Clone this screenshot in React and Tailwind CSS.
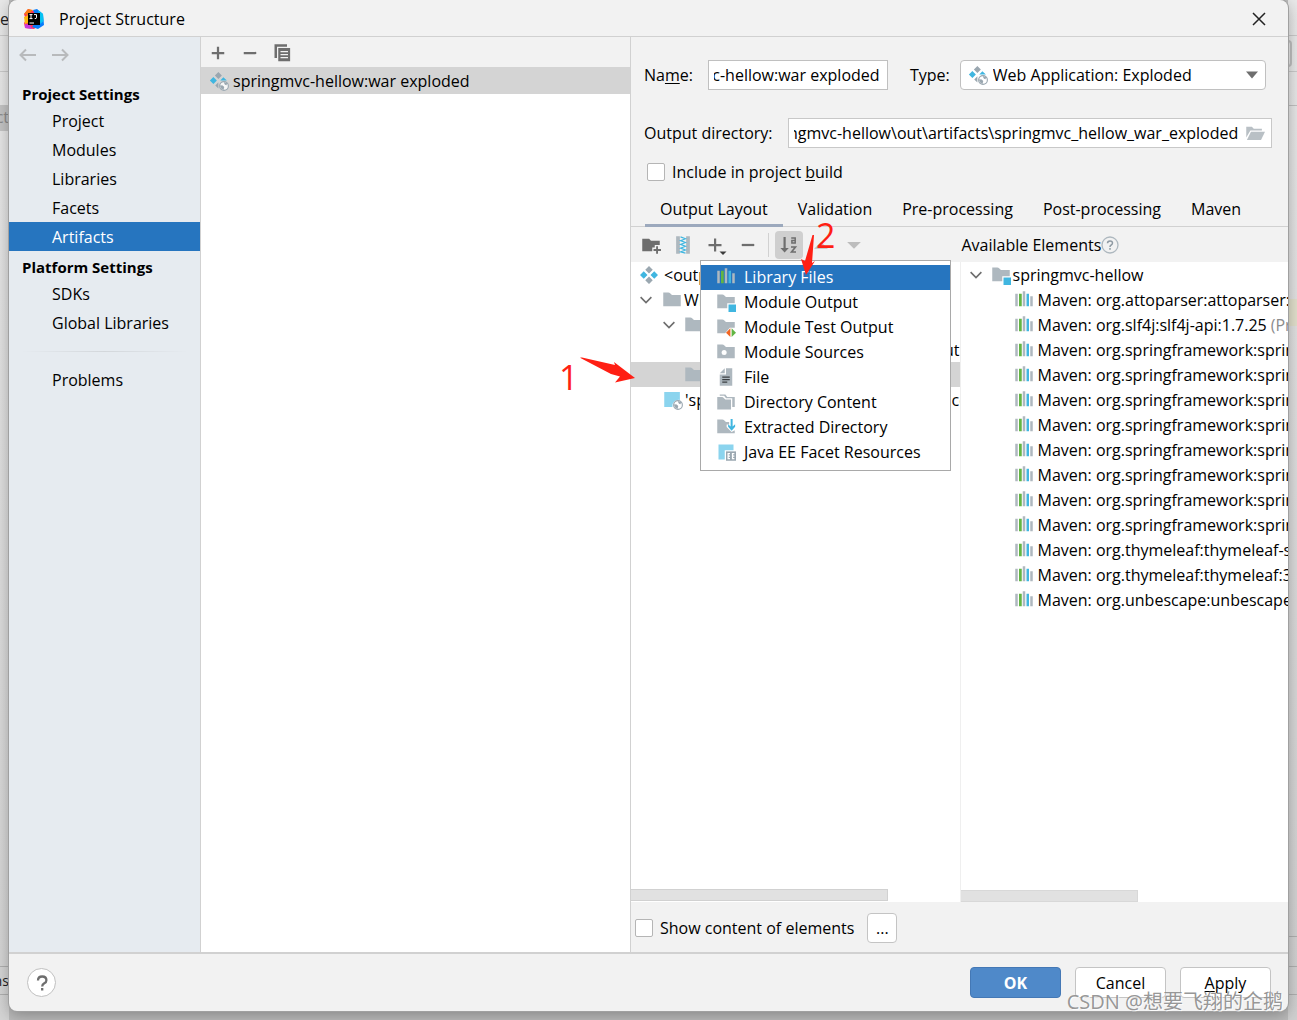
import { useEffect, useRef } from 'react';

const projectSettings = ['Project', 'Modules', 'Libraries', 'Facets', 'Artifacts'];
const platformSettings = ['SDKs', 'Global Libraries'];
const tabs = ['Output Layout', 'Validation', 'Pre-processing', 'Post-processing', 'Maven'];

const libraries = [
  { name: 'Maven: org.attoparser:attoparser:2.0.5' },
  { name: 'Maven: org.slf4j:slf4j-api:1.7.25', note: '(Project Library)' },
  { name: 'Maven: org.springframework:spring-aop:5.3.1' },
  { name: 'Maven: org.springframework:spring-beans:5.3.1' },
  { name: 'Maven: org.springframework:spring-context:5.3.1' },
  { name: 'Maven: org.springframework:spring-core:5.3.1' },
  { name: 'Maven: org.springframework:spring-expression:5.3.1' },
  { name: 'Maven: org.springframework:spring-jcl:5.3.1' },
  { name: 'Maven: org.springframework:spring-web:5.3.1' },
  { name: 'Maven: org.springframework:spring-webmvc:5.3.1' },
  { name: 'Maven: org.thymeleaf:thymeleaf-spring5:3.0.12' },
  { name: 'Maven: org.thymeleaf:thymeleaf:3.0.12' },
  { name: 'Maven: org.unbescape:unbescape:1.1.6' },
];

const FOLDER = 'M1 13h14V4H8L6.7 2.7A2.4 2.4 0 0 0 5 2H1z';

function Icon({ children, className = '' }) {
  return (
    <svg viewBox="0 0 16 16" className={`size-5 shrink-0 ${className}`} aria-hidden="true">
      {children}
    </svg>
  );
}

const Plus = () => <Icon><path d="M7.1 3h1.8v4.1H13v1.8H8.9V13H7.1V8.9H3V7.1h4.1z" fill="#6e6e6e" /></Icon>;
const Minus = () => <Icon><path d="M3 7.1h10v1.8H3z" fill="#6e6e6e" /></Icon>;

const Copy = () => (
  <Icon>
    <path d="M2 1h10v2H4v9H2z" fill="#6e6e6e" />
    <path fillRule="evenodd" d="M5 4h9.500v10.500H5zM6.800 6.300v1h6v-1zM6.800 8.700v1h6v-1zM6.800 11.100v1h6v-1z" fill="#6e6e6e" />
  </Icon>
);

const Folder = () => <Icon><path d={FOLDER} fill="#aeb8bf" /></Icon>;

const ModuleFolder = () => (
  <Icon>
    <path d="M1 13h8V9h6V4H8L6.700 2.700A2.400 2.400 0 0 0 5 2H1z" fill="#aeb8bf" />
    <path d="M10 10h6v6h-6z" fill="#40b6e0" />
  </Icon>
);

const TestFolder = () => (
  <Icon>
    <path d="M1 13h6.300L11 8.500h4V4H8L6.700 2.700A2.400 2.400 0 0 0 5 2H1z" fill="#aeb8bf" />
    <path d="M11.500 9v7L8 12.500z" fill="#f26522" />
    <path d="M12.500 9v7l3.500-3.500z" fill="#62b543" />
  </Icon>
);

const SourceFolder = () => (
  <Icon>
    <path d={FOLDER} fill="#aeb8bf" />
    <circle cx="6.500" cy="8.300" r="2" fill="#fff" />
  </Icon>
);

const FileIcon = () => (
  <Icon>
    <path d="M7 1v4H3z" fill="#aeb8bf" />
    <path d="M8 1h5v14H3V6h5z" fill="#aeb8bf" />
    <path d="M5 7.500h6v1H5zM5 9.500h6v1H5zM5 11.500h4v1H5z" fill="#3b3f43" />
  </Icon>
);

const DirectoryContent = () => (
  <Icon>
    <path d="M1 14h11V6H7.500L6.200 4.700A2 2 0 0 0 4.800 4H1z" fill="#aeb8bf" />
    <path d="M3 3V2h4.500l1.500 2H15v8h-2V5H8L6.500 3z" fill="#aeb8bf" />
  </Icon>
);

const ExtractedDirectory = () => (
  <Icon>
    <path d="M1 13h14v-2.500l-2.500 1.500L8.500 8V6h2V4H8L6.700 2.700A2.400 2.400 0 0 0 5 2H1z" fill="#aeb8bf" />
    <path d="M11.700 1.500h1.600v6l2-1.700v2L12.500 11 9.700 7.800v-2l2 1.700z" fill="#40b6e0" />
  </Icon>
);

const FacetResources = () => (
  <Icon>
    <path d="M2 2h12v4.500H7V14H2z" fill="#8bd4ee" />
    <path d="M8 7.500h8V15H8z" fill="#9aa7b0" />
    <path d="M9.200 8.700h2v1h-1v1h1v1h-1v1h1v1h-2zM12.700 8.700h2v1h-1v1h1v1h-1v1h1v1h-2z" fill="#fff" />
  </Icon>
);

const Globe = () => (
  <g>
    <circle cx="12" cy="12" r="3.600" fill="#fff" fillOpacity="0.800" />
    <circle cx="12" cy="12" r="3.500" fill="none" stroke="#9aa7b0" strokeWidth="0.900" />
    <path d="M9 11.300l2 .2 1.200 1.300-.6 2.300-1.500-.7L9 12.800zM12 8.800l2.500 1-.5 1.500-1.200-.3-.6-1z" fill="#9aa7b0" />
  </g>
);

const WebFacet = () => (
  <Icon>
    <path d="M1 1.500h12.500V8A5 5 0 0 0 7.500 13.500H1z" fill="#8bd4ee" />
    <Globe />
  </Icon>
);

const Artifact = () => (
  <Icon>
    <path d="M8 .8l3 3-3 3-3-3zM8 9.200l3 3-3 3-3-3z" fill="#9aa7b0" />
    <path d="M3.800 5l3 3-3 3-3-3zM12.200 5l3 3-3 3-3-3z" fill="#40b6e0" />
  </Icon>
);

const WebArtifact = () => (
  <Icon>
    <path d="M7.500.8l2.800 2.800-2.800 2.800-2.800-2.800zM5 11.500l2.500-2.500v5z" fill="#9aa7b0" />
    <path d="M3.500 4.800l2.800 2.800-2.800 2.800L.7 7.600zM11.500 5l2.800 2.500H9z" fill="#40b6e0" />
    <Globe />
  </Icon>
);

const Library = () => (
  <Icon>
    <path d="M1 3h2v10H1zM7 1h2v12H7zM13 5h2v8h-2z" fill="#aeb8bf" />
    <path d="M4 3h2.200v10H4z" fill="#62b543" />
    <path d="M10 3h2v10h-2z" fill="#40b6e0" />
  </Icon>
);

const Chevron = () => (
  <Icon><path d="M3.700 5.700L8 10l4.300-4.300" fill="none" stroke="#6e6e6e" strokeWidth="1.300" /></Icon>
);

const NewFolder = () => (
  <Icon>
    <path d="M1 13h8v-3h2V8h4V4.500H8L6.500 3H1z" fill="#6e6e6e" />
    <path d="M12.100 9h1.500v2.200H16v1.500h-2.400V15h-1.500v-2.300H10v-1.500h2.100z" fill="#6e6e6e" />
  </Icon>
);

const Archive = () => (
  <Icon>
    <path d="M2.500 1H5.500v14H2.500zM10.500 1h3v14h-3z" fill="#aeb8bf" />
    <path d="M6 1.500l4 1.500-4 1.500L10 6 6 7.500 10 9l-4 1.500 4 1.500-4 1.500 4 1" fill="none" stroke="#40b6e0" strokeWidth="0.900" />
  </Icon>
);

const SortAz = () => (
  <svg viewBox="0 0 20 20" className="size-5 shrink-0" aria-hidden="true">
    <path d="M4.500 2h2.200v11h3.100l-4.200 4.500L1.400 13h3.100z" fill="#6e6e6e" />
    <path d="M12.200 3h4v5.700M16.200 5.400h-3.300v2.700h3.300" fill="none" stroke="#6e6e6e" strokeWidth="1.500" />
    <path d="M12 12h4.500L12.500 17H17" fill="none" stroke="#6e6e6e" strokeWidth="1.600" />
  </svg>
);

const OpenFolder = () => (
  <Icon>
    <path d="M1 11.500V3h4.500L7 4.500h6.500V6H4.300z" fill="#b9c0c5" />
    <path d="M4.800 7H16l-3.200 6.500H1.500z" fill="#b9c0c5" />
  </Icon>
);

const Logo = () => (
  <svg viewBox="0 0 20 20" className="size-5 shrink-0" aria-hidden="true">
    <path d="M4 0l6 2 4 15-4 3-9-1-1-5 2-3-2-6z" fill="#fe315d" />
    <path d="M4 0l5 1-5 5-4-1z" fill="#f97a12" />
    <path d="M0 8l4-2v8l-3 1z" fill="#fdb60d" />
    <path d="M1 15l5 1 2 4-7-1z" fill="#c838e0" />
    <path d="M9 1l4-1 6 5 1 11-6 4-6-2 5-7z" fill="#087cfa" />
    <path d="M14 1l5 4 .5 7-3 3z" fill="#07c3f2" />
    <path d="M4 4h12v12H4z" fill="#000" />
    <path d="M5.500 5.600h3M7 5.600v4M5.500 9.600h3M10 5.600h2.500v3.200q0 1-1.800.8M5.500 14h4.500" fill="none" stroke="#fff" />
  </svg>
);

const menuItems = [
  { label: 'Library Files', icon: Library, active: true },
  { label: 'Module Output', icon: ModuleFolder },
  { label: 'Module Test Output', icon: TestFolder },
  { label: 'Module Sources', icon: SourceFolder },
  { label: 'File', icon: FileIcon },
  { label: 'Directory Content', icon: DirectoryContent },
  { label: 'Extracted Directory', icon: ExtractedDirectory },
  { label: 'Java EE Facet Resources', icon: FacetResources },
];

// Text field that shows the end of a value that is too long for it
function EndInput({ id, value, className }) {
  const ref = useRef(null);

  useEffect(() => {
    ref.current.scrollLeft = ref.current.scrollWidth;
  }, []);

  return <input id={id} ref={ref} type="text" defaultValue={value} className={`min-w-0 outline-none ${className}`} />;
}

function NavItem({ label, active }) {
  return (
    <li>
      <a
        href="#"
        className={`flex h-[29px] items-center pl-[43px] ${active ? 'bg-[#2675bf] text-white' : ''}`}
      >
        {label}
      </a>
    </li>
  );
}

function Sidebar() {
  return (
    <nav className="w-48 shrink-0 border-r border-[#d1d1d1] bg-[#e6ebf0]">
      <div className="flex h-[43px] items-center gap-3 pt-1 pb-3 pl-[9px] text-[#b8babc]">
        <button type="button" aria-label="Back">
          <svg viewBox="0 0 20 20" className="size-5" fill="none" stroke="currentColor" strokeWidth="2"><path d="M18 10H3M8 4.500L2.500 10 8 15.500" /></svg>
        </button>
        <button type="button" aria-label="Forward">
          <svg viewBox="0 0 20 20" className="size-5" fill="none" stroke="currentColor" strokeWidth="2"><path d="M2 10h15M12 4.500l5.500 5.500-5.500 5.500" /></svg>
        </button>
      </div>
      <h2 className="flex h-[26px] items-center pt-[2px] pl-[13px] text-[15px] font-bold">Project Settings</h2>
      <ul>
        {projectSettings.map(item => <NavItem key={item} label={item} active={item === 'Artifacts'} />)}
      </ul>
      <h2 className="flex h-7 items-center pt-1 pl-[13px] text-[15px] font-bold">Platform Settings</h2>
      <ul>
        {platformSettings.map(item => <NavItem key={item} label={item} />)}
      </ul>
      <hr className="mx-3 mt-[14px] mb-[13px] h-px border-0 bg-linear-to-r from-transparent via-[#d3d7db] to-transparent" />
      <ul>
        <NavItem label="Problems" />
      </ul>
    </nav>
  );
}

function ArtifactList() {
  return (
    <section className="flex w-[430px] shrink-0 flex-col border-r border-[#d1d1d1] bg-white">
      <div className="flex h-[30px] items-center gap-3 bg-[#f2f2f2] px-[7px] pt-px">
        <button type="button" aria-label="Add"><Plus /></button>
        <button type="button" aria-label="Remove"><Minus /></button>
        <button type="button" aria-label="Copy"><Copy /></button>
      </div>
      <div className="flex h-[27px] items-center gap-1 bg-[#d4d4d4] pl-2">
        <WebArtifact />
        springmvc-hellow:war exploded
      </div>
    </section>
  );
}

function AddMenu() {
  return (
    <ul role="menu" className="absolute top-[25px] -left-[5px] z-10 w-[251px] border border-[#a9a9a9] bg-white pt-1 pb-[5px]">
      {menuItems.map(({ label, icon: ItemIcon, active }) => (
        <li key={label} role="none">
          <button
            type="button"
            role="menuitem"
            className={`flex h-[25px] w-full items-center gap-2 pl-[15px] ${active ? 'bg-[#2675bf] text-white' : ''}`}
          >
            <ItemIcon />
            {label}
          </button>
        </li>
      ))}
    </ul>
  );
}

function LayoutToolbar() {
  return (
    <div className="flex h-[35px] items-center pl-[10px]">
      <button type="button" aria-label="Create directory" className="mr-3"><NewFolder /></button>
      <button type="button" aria-label="Create archive" className="mr-3"><Archive /></button>
      <div className="relative mr-[13px] flex">
        <button type="button" aria-label="Add copy of">
          <svg viewBox="0 0 20 20" className="size-5 overflow-visible" aria-hidden="true">
            <path d="M9 3.500h2.200V9h5.300v2.200h-5.300v5.300H9v-5.300H3.500V9H9z" fill="#6e6e6e" />
            <path d="M14.500 16.500h7l-3.500 3.500z" fill="#3c3c3c" />
          </svg>
        </button>
        <AddMenu />
      </div>
      <button type="button" aria-label="Remove"><Minus /></button>
      <span className="mx-[10px] h-6 w-px bg-[#d1d1d1]" />
      <button type="button" aria-label="Sort elements" aria-pressed="true" className="mr-2 -ml-1 rounded bg-[#cfcfcf] p-1">
        <SortAz />
      </button>
      <button type="button" aria-label="Move up" className="mr-[13px]">
        <Icon><path d="M2.500 11L8 5.500l5.500 5.500z" fill="#bdbdbd" /></Icon>
      </button>
      <button type="button" aria-label="Move down">
        <Icon><path d="M2.500 5.500L8 11l5.500-5.500z" fill="#bdbdbd" /></Icon>
      </button>
    </div>
  );
}

function OutputTree() {
  return (
    <div className="flex min-h-0 flex-1 flex-col justify-between overflow-hidden bg-white whitespace-nowrap">
      <ul className="leading-6">
        <li className="flex h-[25px] items-center gap-[5px] pl-2"><Artifact />&lt;output root&gt;</li>
        <li className="flex h-[25px] items-center gap-[2px] pl-[5px]"><Chevron /><span className="w-[2px]" /><Folder />WEB-INF</li>
        <li className="flex h-[25px] items-center gap-[5px] pl-7"><Chevron /><Folder />classes</li>
        <li className="flex h-[25px] items-center gap-[3px] pl-[75px]"><ModuleFolder />'springmvc-hellow' compile output</li>
        <li className="flex h-[25px] items-center gap-[3px] bg-[#d4d4d4] pl-[53px]"><Folder />lib</li>
        <li className="flex h-[25px] items-center gap-[2px] pl-8"><WebFacet />'springmvc-hellow' module: 'Web' facet resources</li>
      </ul>
      <div className="mb-px h-3 w-[257px] border border-l-0 border-[#d1d1d1] bg-[#e1e1e1]" />
    </div>
  );
}

function AvailableTree() {
  return (
    <div className="flex min-h-0 flex-1 flex-col justify-between overflow-hidden border-l border-[#efefef] bg-white whitespace-nowrap">
      <ul>
        <li className="flex h-[25px] items-center gap-[2px] pl-[5px]">
          <Chevron /><span className="w-px" /><ModuleFolder />springmvc-hellow
        </li>
        {libraries.map(lib => (
          <li key={lib.name} className="flex h-[25px] items-center gap-1 pl-[53px]">
            <Library />
            <span>{lib.name}</span>
            {lib.note && <span className="text-[#8c8c8c]">{lib.note}</span>}
          </li>
        ))}
      </ul>
      <div className="h-3 w-[177px] border border-l-0 border-[#d8d8d8] bg-[#e1e1e1]" />
    </div>
  );
}

function Checkbox({ id, children }) {
  return (
    <div className="flex items-center gap-[7px]">
      <input id={id} type="checkbox" className="size-[18px] appearance-none rounded-xs border border-[#b5b5b5] bg-white" />
      <label htmlFor={id}>{children}</label>
    </div>
  );
}

function ArtifactEditor() {
  return (
    <section className="flex min-w-0 flex-1 flex-col">
      <div className="flex items-center pt-[23px] pr-[22px] pl-[13px]">
        <label htmlFor="name" className="w-16">Na<u className="underline-offset-2">m</u>e:</label>
        <EndInput id="name" value="springmvc-hellow:war exploded" className="h-[30px] w-[180px] border border-[#c0c0c0] bg-white pr-[7px] pl-[5px]" />
        <label htmlFor="type" className="mr-[10px] ml-[22px]">Type:</label>
        <div className="flex h-[30px] flex-1 items-center rounded border border-[#c0c0c0] bg-white pl-[7px]">
          <WebArtifact />
          <select id="type" className="flex-1 appearance-none bg-transparent pl-[5px] outline-none">
            <option>Web Application: Exploded</option>
          </select>
          <svg viewBox="0 0 12 8" className="pointer-events-none mr-[7px] h-2 w-3" aria-hidden="true"><path d="M0 .5h12L6 7.500z" fill="#6e6e6e" /></svg>
        </div>
      </div>
      <div className="flex items-center pt-7 pr-4 pl-[13px]">
        <label htmlFor="output" className="w-36 shrink-0">Output directory:</label>
        <div className="flex h-[30px] min-w-0 flex-1 items-center border border-[#c8c8c8] bg-white pr-[6px] pl-[5px]">
          <EndInput id="output" value="springmvc-hellow\out\artifacts\springmvc_hellow_war_exploded" className="mr-[7px] flex-1" />
          <button type="button" aria-label="Browse"><OpenFolder /></button>
        </div>
      </div>
      <div className="pt-3 pl-4">
        <Checkbox id="build">Include in project <u className="underline-offset-2">b</u>uild</Checkbox>
      </div>
      <div role="tablist" className="mt-2 flex h-[35px] border-b border-[#d1d1d1] px-[14px] whitespace-nowrap">
        {tabs.map((tab, i) => (
          <button
            key={tab}
            type="button"
            role="tab"
            aria-selected={i === 0}
            className={`-mb-px border-b-3 px-[15px] pt-[2px] ${i === 0 ? 'border-[#9ca9bd]' : 'border-transparent'}`}
          >
            {tab}
          </button>
        ))}
      </div>
      <div className="flex min-h-0 flex-1">
        <div className="flex min-w-0 flex-1 flex-col">
          <LayoutToolbar />
          <OutputTree />
        </div>
        <div className="flex min-w-0 flex-1 flex-col">
          <h3 className="flex h-[35px] shrink-0 items-center pl-[2px]">
            Available Elements
            <svg viewBox="0 0 20 20" className="size-5" fill="none" stroke="#aeb8bf" aria-hidden="true">
              <circle cx="9" cy="10" r="8" strokeWidth="1.300" />
              <path d="M6.500 8.200q0-2.300 2.500-2.300t2.500 2.200q0 1.200-1.300 1.900T9 12M9 13v1.700" stroke="#8f9aa3" strokeWidth="1.500" />
            </svg>
          </h3>
          <AvailableTree />
        </div>
      </div>
      <div className="flex h-[50px] items-center gap-[13px] pt-[2px] pl-1">
        <Checkbox id="show">Show content of elements</Checkbox>
        <button type="button" className="size-[30px] rounded border border-[#c4c4c4] bg-white">...</button>
      </div>
    </section>
  );
}

function Footer() {
  return (
    <footer className="flex h-[59px] shrink-0 items-center gap-[14px] border-t-2 border-[#d1d1d1] pr-[17px] pl-[18px]">
      <button type="button" aria-label="Help" className="mr-auto flex size-[29px] items-center justify-center rounded-full border border-[#c0c0c0] bg-white">
        <svg viewBox="0 0 20 20" className="size-5" fill="none" stroke="#6e6e6e" strokeWidth="2.300" aria-hidden="true">
          <path d="M6 7.500q0-4 4.200-4t4.200 3.700q0 1.900-2.100 3.100T10.200 13.500M10.200 15v2.500" />
        </svg>
      </button>
      <button type="button" className="h-[31px] w-[91px] rounded border border-[#4478b5] bg-[#4f89c9] font-bold text-white">OK</button>
      <button type="button" className="h-[31px] w-[91px] rounded border border-[#c4c4c4] bg-white">Cancel</button>
      <button type="button" className="h-[31px] w-[91px] rounded border border-[#c4c4c4] bg-white"><u className="underline-offset-2">A</u>pply</button>
    </footer>
  );
}

// Slices of the editor window that stay visible on both sides of the dialog
function Backdrop() {
  return (
    <div className="absolute inset-0 flex justify-between overflow-hidden bg-[#bcbcbc] text-[#222]">
      <div className="flex w-[9px] flex-col bg-linear-to-b from-[#e9e9e9] to-[#d4d4d4]">
        <div className="flex h-9 justify-end border-b border-[#cacaca] pt-[7px]">Le</div>
        <div className="h-9 border-b border-[#cacaca]" />
        <div className="h-[33px]" />
        <div className="flex h-[26px] justify-end bg-[#c4c4c4] text-[#8c8c8c]">ct</div>
        <div className="flex-1" />
        <div className="mb-[25px] flex h-[29px] justify-end border-y border-[#b0b0b0] pt-1 text-sm">ms</div>
      </div>
      <div className="flex w-[9px] flex-col bg-linear-to-b from-[#e9e9e9] to-[#d0d0d0]">
        <div className="h-9 border-b border-[#cacaca]" />
        <div className="h-9 border-b border-[#cacaca] pt-1 pr-[5px]"><div className="h-[27px] rounded-r border-2 border-l-0 border-[#c0c0c0]" /></div>
        <div className="h-[34px] border-b border-[#c0c0c0]" />
        <div className="mt-[193px] h-[27px] bg-[#e2e0cc]" />
        <div className="flex-1" />
        <div className="h-[30px] border-t border-[#b0b0b0]" />
        <div className="mb-[25px] h-[29px] border-y border-[#b0b0b0]" />
      </div>
    </div>
  );
}

function Annotations() {
  return (
    <div className="pointer-events-none absolute inset-0 z-20 text-[#ff1f14]">
      <span className="absolute top-[357px] left-[559px] text-[34px] leading-10">1</span>
      <svg viewBox="0 0 55 26" className="absolute top-[357px] left-[580px] h-[26px] w-[55px]" fill="currentColor" aria-hidden="true">
        <path d="M0 .8Q1 .2 2 .6L35 8 34 5 55 21 35 25.500 40 19.500 31 17Z" />
      </svg>
      <span className="absolute top-[215px] left-[816px] text-[34px] leading-10">2</span>
      <svg viewBox="0 0 16 40" className="absolute top-[235px] left-[801px] h-10 w-4" fill="currentColor" aria-hidden="true">
        <path d="M11.500 0H13L11 28 14 26 5 40 0 24 4 26Z" />
      </svg>
    </div>
  );
}

export default function App() {
  return (
    <div className="relative h-screen overflow-hidden px-[9px] pb-[9px] font-['Open_Sans','Noto_Sans_CJK_SC',sans-serif] text-base text-black">
      <Backdrop />
      <main className="relative flex h-full flex-col overflow-hidden rounded-lg bg-[#f2f2f2] shadow-[0_4px_16px_rgba(0,0,0,0.3)] ring-1 ring-[#a0a0a0]">
        <header className="flex h-[37px] shrink-0 items-center border-b border-[#d1d1d1] pt-px pr-[19px] pl-[15px]">
          <Logo />
          <h1 className="ml-[15px] flex-1">Project Structure</h1>
          <button type="button" aria-label="Close">
            <svg viewBox="0 0 20 20" className="size-5" fill="none" stroke="#222" strokeWidth="1.500"><path d="M4 4l12 12M16 4L4 16" /></svg>
          </button>
        </header>
        <div className="flex min-h-0 flex-1">
          <Sidebar />
          <ArtifactList />
          <ArtifactEditor />
        </div>
        <Footer />
      </main>
      <Annotations />
      <p className="pointer-events-none absolute right-[14px] bottom-1 z-20 text-xl leading-7 whitespace-nowrap text-[#8a8a8a]/90 [text-shadow:1px_1px_0_rgba(255,255,255,0.8)]">
        CSDN @想要飞翔的企鹅
      </p>
    </div>
  );
}
